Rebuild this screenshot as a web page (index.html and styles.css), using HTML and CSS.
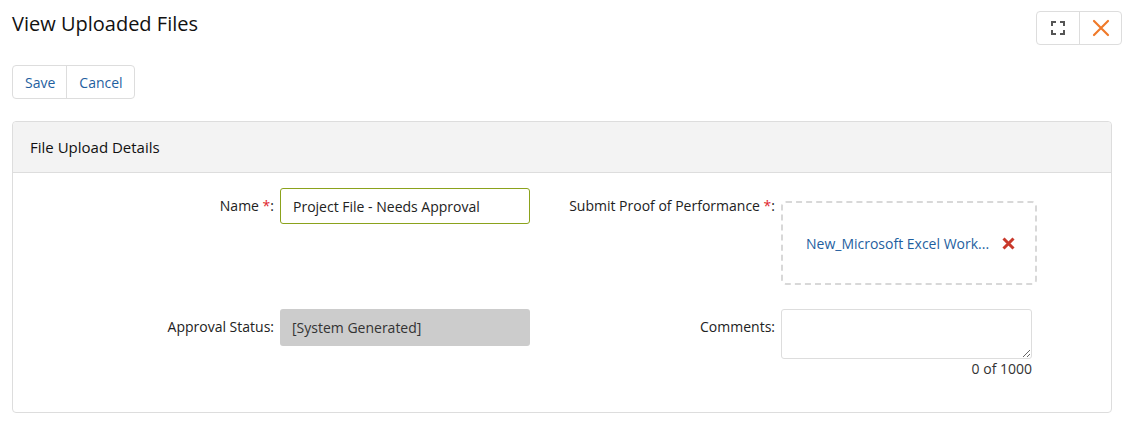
FILE: index.html
```html
<!DOCTYPE html>
<html>
<head>
<meta charset="UTF-8">
<title>View Uploaded Files</title>
<link rel="stylesheet" href="styles.css">
</head>
<body>
<div class="page">
  <div class="top">
    <h1 class="title">View Uploaded Files</h1>
    <div class="btn-group">
      <button class="btn icon-btn" title="Maximize">
        <svg width="14" height="14" viewBox="0 0 14 14" fill="none" stroke="#555" stroke-width="2">
          <path d="M1 5V1h4M9 1h4v4M13 9v4H9M5 13H1V9"/>
        </svg>
      </button>
      <button class="btn icon-btn" title="Close">
        <svg width="18" height="18" viewBox="0 0 18 18" stroke="#f07a2a" stroke-width="2.2" stroke-linecap="round">
          <path d="M2 2l14 14M16 2L2 16"/>
        </svg>
      </button>
    </div>
  </div>

  <div class="btn-group actions">
    <button class="btn">Save</button>
    <button class="btn">Cancel</button>
  </div>

  <div class="panel">
    <div class="panel-head">File Upload Details</div>
    <div class="panel-body">
      <label class="lbl">Name <span class="req">*</span>:</label>
      <div class="field"><input class="input" type="text" value="Project File - Needs Approval"></div>

      <label class="lbl">Submit Proof of Performance <span class="req">*</span>:</label>
      <div class="field">
        <div class="dropzone">
          <a class="file-link" href="#">New_Microsoft Excel Work...</a>
          <span class="remove">
            <svg width="13" height="13" viewBox="0 0 13 13" stroke="#c9392b" stroke-width="3">
              <path d="M1.5 1.5l10 10M11.5 1.5l-10 10"/>
            </svg>
          </span>
        </div>
      </div>

      <label class="lbl">Approval Status:</label>
      <div class="field"><div class="readonly">[System Generated]</div></div>

      <label class="lbl">Comments:</label>
      <div class="field">
        <textarea class="textarea"></textarea>
        <div class="counter">0 of 1000</div>
      </div>
    </div>
  </div>
</div>
</body>
</html>
```

FILE: styles.css
```css
body{
  margin: 0;
  font-family: "Open Sans", "DejaVu Sans", sans-serif;
  font-size: 14px;
  color: #222;
  background: #fff;
}
.page{
  padding: 0 14px 0 12px;
}
.top{
  display: flex;
  justify-content: space-between;
  align-items: flex-start;
  padding-top: 11px;
}
.title{
  margin: 0;
  font-size: 20px;
  font-weight: 400;
  line-height: 26px;
  color: #111;
}
.btn-group{
  display: flex;
  width: fit-content;
  border: 1px solid #ddd;
  border-radius: 4px;
  background: #fff;
}
.btn{
  height: 32px;
  border: none;
  background: transparent;
  font-family: inherit;
  font-size: 14px;
  color: #1f5f9f;
  padding: 0 11px 0 12px;
  cursor: pointer;
}
.btn + .btn{
  border-left: 1px solid #ddd;
}
.icon-btn{
  width: 42px;
  padding: 0;
  display: flex;
  align-items: center;
  justify-content: center;
}
.actions{
  margin-top: 20px;
}

/* 상세 패널 */
.panel{
  margin-top: 22px;
  border: 1px solid #ddd;
  border-radius: 4px;
  width: 1098px;
}
.panel-head{
  background: #f3f3f3;
  border-bottom: 1px solid #ddd;
  border-radius: 4px 4px 0 0;
  height: 50px;
  line-height: 50px;
  padding-left: 17px;
  font-size: 15px;
  color: #111;
}
.panel-body{
  display: grid;
  grid-template-columns: 261px 250px 239px 256px;
  column-gap: 6px;
  row-gap: 24px;
  padding: 15px 0 33px;
}
.lbl{
  text-align: right;
  line-height: 36px;
  color: #222;
}
.req{
  color: #e0262b;
}
.input{
  box-sizing: border-box;
  width: 250px;
  height: 36px;
  border: 1px solid #8ba21c;
  border-radius: 3px;
  padding: 0 12px;
  font-family: inherit;
  font-size: 14px;
  color: #222;
  outline: none;
}
.dropzone{
  box-sizing: border-box;
  margin-top: 13px;
  width: 256px;
  height: 84px;
  border: 2px dashed #d8d8d8;
  border-radius: 5px;
  display: flex;
  align-items: center;
  padding-left: 23px;
}
.file-link{
  color: #1f5f9f;
  text-decoration: none;
}
.remove{
  display: inline-flex;
  margin-left: 13px;
}
.readonly{
  box-sizing: border-box;
  width: 250px;
  height: 37px;
  line-height: 37px;
  background: #cccccc;
  border-radius: 3px;
  padding-left: 12px;
  color: #333;
}
.textarea{
  display: block;
  box-sizing: border-box;
  width: 251px;
  height: 50px;
  border: 1px solid #ddd;
  border-radius: 3px;
  margin: 0;
  font-family: inherit;
}
.counter{
  width: 251px;
  text-align: right;
  line-height: 20px;
  color: #333;
}
```
